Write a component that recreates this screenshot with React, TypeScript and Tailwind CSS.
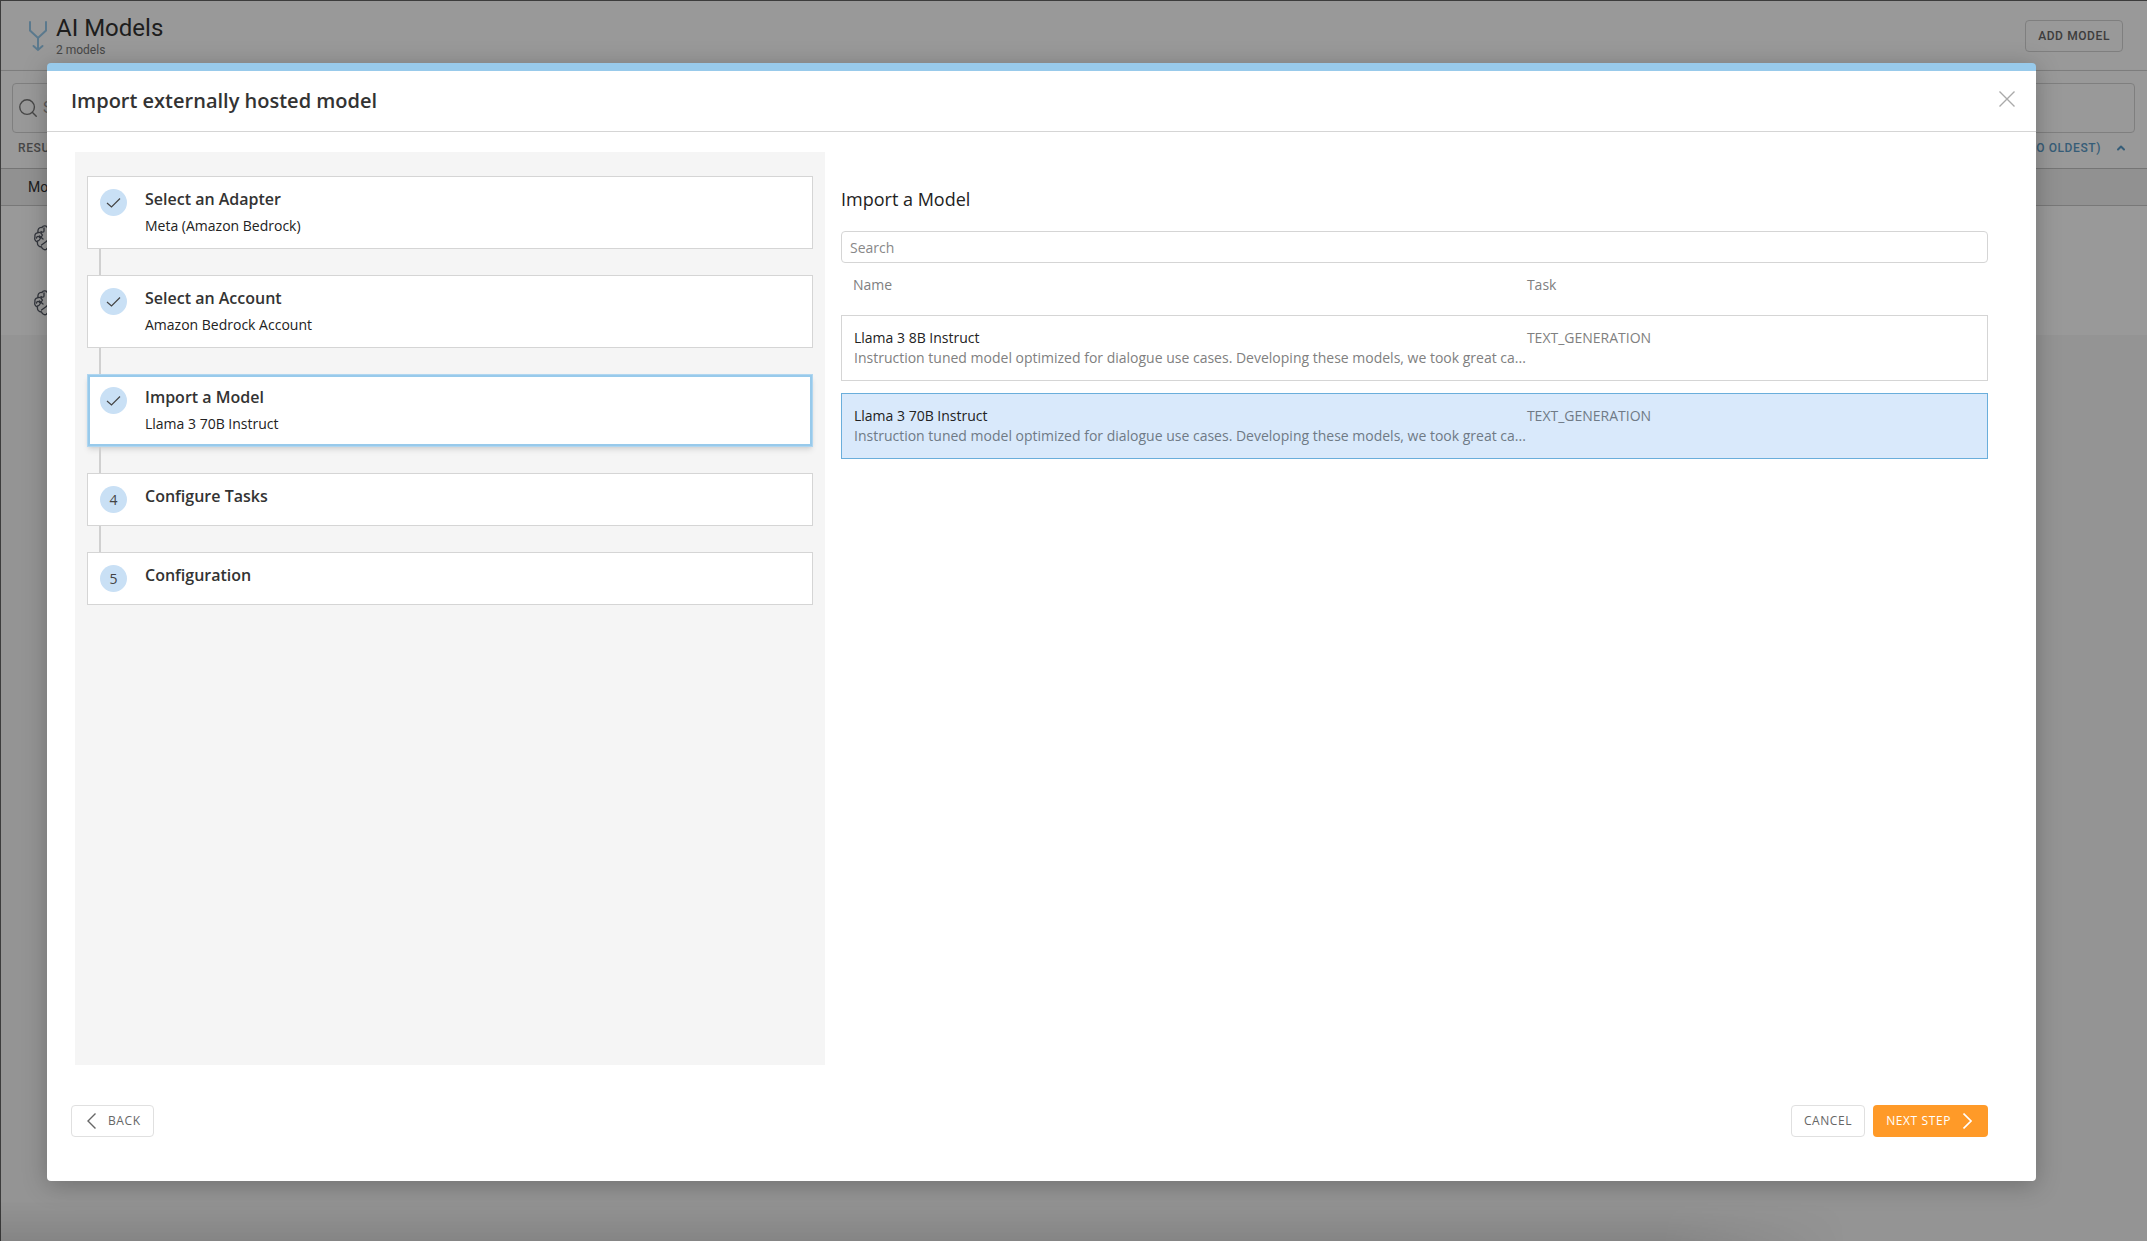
import { ChevronUp, Search } from 'lucide-react';
import { useState } from 'react';

const steps = [
    { title: 'Select an Adapter', value: 'Meta (Amazon Bedrock)' },
    { title: 'Select an Account', value: 'Amazon Bedrock Account' },
    { title: 'Import a Model', value: 'Llama 3 70B Instruct' },
    { title: 'Configure Tasks', value: '' },
    { title: 'Configuration', value: '' },
];

const summary =
    'Instruction tuned model optimized for dialogue use cases. Developing these models, we took great ca...';

const models = [
    { name: 'Llama 3 8B Instruct', task: 'TEXT_GENERATION', summary },
    { name: 'Llama 3 70B Instruct', task: 'TEXT_GENERATION', summary },
];

function MergeIcon() {
    return (
        <svg className="w-5 h-8" viewBox="0 0 20 32" fill="none" stroke="#98caeb" strokeWidth="2" strokeLinecap="round">
            <path d="M2 2v8.500l8 7.500 8-7.500V2M10 18v12M5.500 26l4.500 4 4.500-4" />
        </svg>
    );
}

function BrainIcon() {
    return (
        <svg className="w-[26px] h-[26px]" viewBox="0 0 26 26" fill="none" stroke="#555a66" strokeWidth="1.3" strokeLinecap="round">
            <path d="M13 2c-1-1.500-4-1.500-5 .5C5 2 3.500 4.500 4 7.500 1.500 8 .5 10 1 12c-.8 2 .2 4.500 2.500 5-.5 3 1.500 5 4 5 1 3 4.500 3.500 5.500 1.500" />
            <path d="M13 2c1-1.500 4-1.500 5 .5 3-.5 4.500 2 4 5 2.500.5 3.500 2.500 3 4.500.8 2-.2 4.500-2.500 5 .5 3-1.500 5-4 5-1 3-4.500 3.500-5.500 1.500" />
            <path d="M4 7.500c2-.5 3.500.5 4 2M10 3v3c0 1.500-2 1.500-3 .5M2.500 13c.5-2 2.500-2 3-.5M8.500 10L6 14c-.5 1-1.500 2-2.500 2M5.500 11l3.500 3M7.500 20l5.500-4" />
            <path d="M22 7.500c-2-.5-3.500.5-4 2M17.500 11l2.500 4M18 20l-5-4" />
        </svg>
    );
}

function CheckIcon() {
    return (
        <svg className="w-[15px] h-3" viewBox="0 0 15 12" fill="none" stroke="#444" strokeWidth="1.2">
            <path d="M1 6l4.500 4L14 1.500" />
        </svg>
    );
}

function ModelsPage() {
    return (
        <div className="min-h-screen bg-[#f7f7f7] font-[Roboto,sans-serif] text-[#333]">
            <header className="h-[71px] flex items-center justify-between pt-0.5 pl-7 pr-6 bg-white border-b border-[#d4d4d4]">
                <div className="flex items-center gap-2">
                    <MergeIcon />
                    <div>
                        <h1 className="text-2xl leading-7">AI Models</h1>
                        <p className="text-xs leading-4 text-[#777]">2 models</p>
                    </div>
                </div>
                <button className="h-8 px-3 rounded-sm border border-[#d4d4d4] text-xs font-medium tracking-wider text-[#666]">
                    ADD MODEL
                </button>
            </header>

            <div className="px-3 pt-3 h-[98px] bg-white border-b border-[#c4c4c4] shadow-sm">
                <label className="h-[50px] flex items-center gap-1 px-1 rounded-sm border border-[#d4d4d4] text-[#777]">
                    <Search className="w-[22px] h-[22px]" strokeWidth={1.5} />
                    <input className="flex-1 outline-none text-base placeholder:text-[#999]" placeholder="Search" aria-label="Search models" />
                </label>
                <div className="flex items-center justify-between h-[30px] pl-1.5 pr-2 text-xs font-medium tracking-wider">
                    <span className="text-[#777]">RESULTS</span>
                    <button className="flex items-center gap-3.5 text-[#5b9bc8]">
                        LAST UPDATED (NEWEST TO OLDEST)
                        <ChevronUp className="w-3 h-3" strokeWidth={4} />
                    </button>
                </div>
            </div>

            <table className="w-full bg-white text-left">
                <thead className="bg-[#f2f2f2] border-b border-[#c8c8c8]">
                    <tr>
                        <th className="h-9 pl-7 text-sm font-normal">Model</th>
                    </tr>
                </thead>
                <tbody>
                    <tr>
                        <td className="h-[65px] pl-[34px]"><BrainIcon /></td>
                    </tr>
                    <tr>
                        <td className="h-[65px] pl-[34px]"><BrainIcon /></td>
                    </tr>
                </tbody>
            </table>
        </div>
    );
}

function StepList({ current }: { current: number }) {
    return (
        <ol className="w-[750px] shrink-0 flex flex-col bg-[#f5f5f5] px-3 py-6">
            {steps.map((step, i) => (
                <li key={step.title}>
                    {i > 0 && <div className="ml-3 w-0.5 h-[26px] bg-[#d0d0d0]" />}
                    <div
                        className={
                            i === current
                                ? 'flex gap-[18px] px-3 py-2 bg-white border border-[#b0d6f0] inset-ring-2 inset-ring-[#98caeb] shadow-md'
                                : 'flex gap-[18px] px-3 py-2 bg-white border border-[#d5d5d5]'
                        }
                    >
                        <span className="mt-1 w-[27px] h-[27px] rounded-full bg-[#c9e0f5] flex items-center justify-center text-sm text-[#444]">
                            {i <= current ? <CheckIcon /> : i + 1}
                        </span>
                        <div className="min-h-[35px] pb-px">
                            <h3 className="text-base leading-7 font-semibold text-[#333]">{step.title}</h3>
                            {step.value && <p className="text-sm leading-[26px] text-[#222]">{step.value}</p>}
                        </div>
                    </div>
                </li>
            ))}
        </ol>
    );
}

function ModelPicker() {
    const [query, setQuery] = useState('');
    const [selected, setSelected] = useState('Llama 3 70B Instruct');
    const visible = models.filter((m) => m.name.toLowerCase().includes(query.toLowerCase()));

    return (
        <section className="flex-1 min-w-0 pt-8">
            <h3 className="text-lg leading-[30px] text-[#222]">Import a Model</h3>
            <input
                className="mt-[17px] block w-full h-8 px-2 rounded-sm border border-[#d5d5d5] text-sm outline-none placeholder:text-[#888]"
                placeholder="Search"
                aria-label="Search"
                value={query}
                onChange={(e) => setQuery(e.target.value)}
            />
            <table className="w-full table-fixed border-separate border-spacing-x-0 border-spacing-y-3 text-sm leading-5 text-left text-[#808080]">
                <thead>
                    <tr>
                        <th className="w-[59.8%] h-7 pb-2 pl-3 font-normal align-top">Name</th>
                        <th className="h-7 pb-2 font-normal align-top">Task</th>
                    </tr>
                </thead>
                <tbody>
                    {visible.map((m) => (
                        <tr
                            key={m.name}
                            onClick={() => setSelected(m.name)}
                            className={
                                m.name === selected
                                    ? 'bg-[#d9e9fb] *:border-[#6aaedb] text-[#6f7a86]'
                                    : '*:border-[#d5d5d5]'
                            }
                        >
                            <td className="h-[66px] pl-3 border-y border-l">
                                <div className="text-[#222]">{m.name}</div>
                                <div className="whitespace-nowrap">{m.summary}</div>
                            </td>
                            <td className="h-[66px] pb-5 border-y border-r">{m.task}</td>
                        </tr>
                    ))}
                </tbody>
            </table>
        </section>
    );
}

function ImportDialog() {
    return (
        <div
            role="dialog"
            aria-labelledby="dialog-title"
            className="flex-1 flex flex-col rounded-sm overflow-hidden bg-white border-t-8 border-[#98caeb] shadow-[0_4px_24px_rgba(0,0,0,0.25)]"
        >
            <div className="h-[61px] shrink-0 flex items-center justify-between pl-6 pr-5 border-b border-[#d5d5d5]">
                <h2 id="dialog-title" className="text-xl font-semibold text-[#333]">Import externally hosted model</h2>
                <button aria-label="Close" className="mb-1 text-[#aaa]">
                    <svg className="w-[18px] h-[18px]" viewBox="0 0 18 18" fill="none" stroke="currentColor" strokeWidth="1.4">
                        <path d="M1.500 1.500l15 15M16.500 1.500l-15 15" />
                    </svg>
                </button>
            </div>

            <div className="flex-1 flex gap-4 pl-7 pr-12 pt-5">
                <StepList current={2} />
                <ModelPicker />
            </div>

            <div className="flex gap-2 pl-6 pr-12 pt-10 pb-11 text-xs font-medium tracking-wider text-[#666]">
                <button className="h-8 mr-auto flex items-center gap-3 pl-[15px] pr-3 rounded-sm border border-[#e0e0e0]">
                    <svg className="w-[9px] h-4" viewBox="0 0 9 16" fill="none" stroke="currentColor" strokeWidth="1.4">
                        <path d="M8.500 .5L1 8l7.500 7.500" />
                    </svg>
                    BACK
                </button>
                <button className="h-8 px-3 rounded-sm border border-[#e0e0e0]">CANCEL</button>
                <button className="h-8 flex items-center gap-3 pl-[13px] pr-4 rounded-sm bg-[#ff9a28] text-white">
                    NEXT STEP
                    <svg className="w-[9px] h-4" viewBox="0 0 9 16" fill="none" stroke="currentColor" strokeWidth="1.6">
                        <path d="M.5 .5L8 8l-7.500 7.500" />
                    </svg>
                </button>
            </div>
        </div>
    );
}

export default function App() {
    return (
        <div className="relative min-h-screen">
            <ModelsPage />
            <div className="absolute inset-0 flex pt-[63px] pr-[111px] pb-[60px] pl-[47px] bg-black/40 font-['Open_Sans',sans-serif]">
                <ImportDialog />
            </div>
            {/* window edge and the soft shade along the bottom */}
            <div className="absolute inset-0 pointer-events-none border-t border-l border-[#3c3c3c]" />
            <div className="absolute bottom-0 left-0 right-[300px] h-10 pointer-events-none bg-linear-to-t from-black/10 to-transparent mask-r-from-90%" />
        </div>
    );
}
